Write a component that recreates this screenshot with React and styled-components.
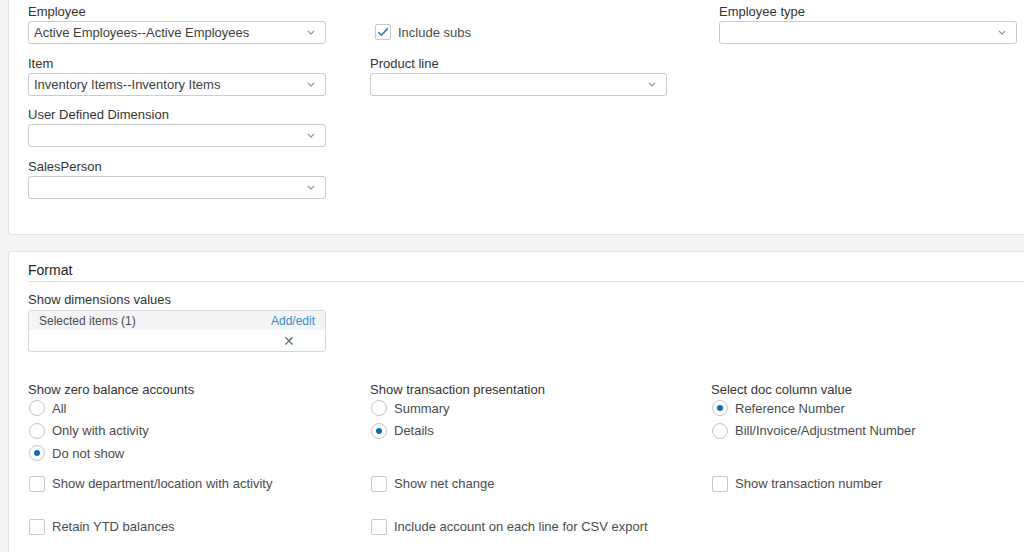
import React from 'react';
import styled, { createGlobalStyle } from 'styled-components';

const GlobalStyle = createGlobalStyle`
  html, body {
    margin: 0;
    padding: 0;
    background: #f4f5f5;
    overflow: hidden;
  }
  body {
    font-family: "Liberation Sans", Arial, sans-serif;
    font-size: 13px;
    color: #393a3d;
  }
`;

const Page = styled.div`
  width: 1036px;
  padding-left: 8px;
  display: flex;
  flex-direction: column;
  gap: 16px;
`;

const Card = styled.section`
  background: #ffffff;
  border: 1px solid #e1e3e4;
  border-top-width: ${(p) => (p.$cut ? '0' : '1px')};
  border-radius: ${(p) => (p.$cut ? '0 0 3px 3px' : '3px')};
  padding: ${(p) => p.$pad};
`;

const FilterGrid = styled.div`
  display: grid;
  grid-template-columns: 342px 349px 1fr;
  row-gap: 11.7px;
`;

const Field = styled.div`
  width: ${(p) => p.$w || 298}px;
  display: flex;
  flex-direction: column;
  gap: ${(p) => (p.$tight ? 1 : 2)}px;
`;

const Label = styled.div`
  font-size: 13px;
  line-height: 16px;
  color: #333436;
`;

const SelectBox = styled.div`
  box-sizing: border-box;
  height: 23px;
  border: 1px solid #c8cbcf;
  border-radius: 3px;
  background: #fff;
  display: flex;
  align-items: center;
  justify-content: space-between;
  padding: 0 10px 0 5px;
  font-size: 13px;
  color: #3d3e41;
`;

const CheckLine = styled.label`
  display: flex;
  align-items: center;
  gap: 7px;
  height: ${(p) => p.$h || 22}px;
  font-size: 13px;
  color: #4a4b4e;
  padding-left: ${(p) => p.$indent || 1}px;
  margin-top: ${(p) => p.$top || 0}px;
`;

const Box = styled.span`
  box-sizing: border-box;
  width: 16px;
  height: 16px;
  border: 1px solid #c6c8cb;
  border-radius: 2px;
  background: #fff;
  display: flex;
  align-items: center;
  justify-content: center;
  flex-shrink: 0;
`;

const Radio = styled.span`
  box-sizing: border-box;
  width: 16px;
  height: 16px;
  border: 1px solid #c3c6c9;
  border-radius: 50%;
  background: #fff;
  display: flex;
  align-items: center;
  justify-content: center;
  flex-shrink: 0;
  &::after {
    content: '';
    width: 6px;
    height: 6px;
    border-radius: 50%;
    background: ${(p) => (p.$on ? '#0a6fb8' : 'transparent')};
  }
`;

const Heading = styled.h2`
  margin: 0 0 10px;
  font-size: 14px;
  font-weight: normal;
  line-height: 18px;
  color: #232426;
  padding-bottom: 2px;
  border-bottom: 1px solid #dcdee0;
`;

const ItemsBox = styled.div`
  box-sizing: border-box;
  width: 298px;
  border: 1px solid #d6d9dc;
  border-radius: 3px;
  overflow: hidden;
`;

const ItemsHead = styled.div`
  height: 19px;
  background: #f3f4f6;
  display: flex;
  align-items: center;
  justify-content: space-between;
  padding: 0 10px;
  font-size: 12px;
  color: #4a4b4e;
`;

const AddEdit = styled.span`
  color: #3a8bc6;
  font-size: 12px;
`;

const ItemsBody = styled.div`
  height: 21px;
  display: flex;
  align-items: center;
  justify-content: flex-end;
  padding-right: 30px;
  color: #707276;
  font-size: 14px;
`;

const OptionsGrid = styled.div`
  display: grid;
  grid-template-columns: 342px 341px 1fr;
  margin-top: ${(p) => p.$top || 0}px;
`;

const Group = styled.div`
  display: flex;
  flex-direction: column;
  & > ${Label} {
    margin-bottom: -1px;
  }
`;

const Chevron = () => (
  <svg width="8" height="5" viewBox="0 0 8 5">
    <polyline points="0.8,0.8 4,4 7.2,0.8" fill="none" stroke="#8a8d92" strokeWidth="1.1" />
  </svg>
);

const Tick = () => (
  <svg width="12" height="10" viewBox="0 0 12 10">
    <polyline points="1.3,5.2 4.4,8.2 10.8,1.4" fill="none" stroke="#2f7bb4" strokeWidth="1.6" />
  </svg>
);

const Select = ({ label, value, w }) => (
  <Field $w={w} $tight>
    <Label>{label}</Label>
    <SelectBox>
      <span>{value}</span>
      <Chevron />
    </SelectBox>
  </Field>
);

const Check = ({ text, checked, top }) => (
  <CheckLine $top={top}>
    <Box>{checked && <Tick />}</Box>
    {text}
  </CheckLine>
);

const RadioGroup = ({ title, options, selected }) => (
  <Group>
    <Label>{title}</Label>
    {options.map((o) => (
      <CheckLine key={o} $h={22.5}>
        <Radio $on={o === selected} />
        {o}
      </CheckLine>
    ))}
  </Group>
);

export default function App() {
  return (
    <>
      <GlobalStyle />
      <Page>
        <Card $cut $pad="4px 0 35px 19px">
          <FilterGrid>
            <Select label="Employee" value="Active Employees--Active Employees" />
            <Field $tight>
              <Label>&nbsp;</Label>
              <CheckLine $indent={4}>
                <Check text="Include subs" checked />
              </CheckLine>
            </Field>
            <Select label="Employee type" value="" />
            <Select label="Item" value="Inventory Items--Inventory Items" />
            <Select label="Product line" value="" w={297} />
            <div />
            <Select label="User Defined Dimension" value="" />
            <div />
            <div />
            <Select label="SalesPerson" value="" />
          </FilterGrid>
        </Card>
        <Card $pad="9px 0 20px 19px">
          <Heading>Format</Heading>
          <Field $w={298}>
            <Label>Show dimensions values</Label>
            <ItemsBox>
              <ItemsHead>
                <span>Selected items (1)</span>
                <AddEdit>Add/edit</AddEdit>
              </ItemsHead>
              <ItemsBody>✕</ItemsBody>
            </ItemsBox>
          </Field>
          <OptionsGrid $top={30}>
            <RadioGroup
              title="Show zero balance accounts"
              options={['All', 'Only with activity', 'Do not show']}
              selected="Do not show"
            />
            <RadioGroup
              title="Show transaction presentation"
              options={['Summary', 'Details']}
              selected="Details"
            />
            <RadioGroup
              title="Select doc column value"
              options={['Reference Number', 'Bill/Invoice/Adjustment Number']}
              selected="Reference Number"
            />
          </OptionsGrid>
          <OptionsGrid $top={8}>
            <Check text="Show department/location with activity" />
            <Check text="Show net change" />
            <Check text="Show transaction number" />
          </OptionsGrid>
          <OptionsGrid $top={21}>
            <Check text="Retain YTD balances" />
            <Check text="Include account on each line for CSV export" />
          </OptionsGrid>
        </Card>
      </Page>
    </>
  );
}
